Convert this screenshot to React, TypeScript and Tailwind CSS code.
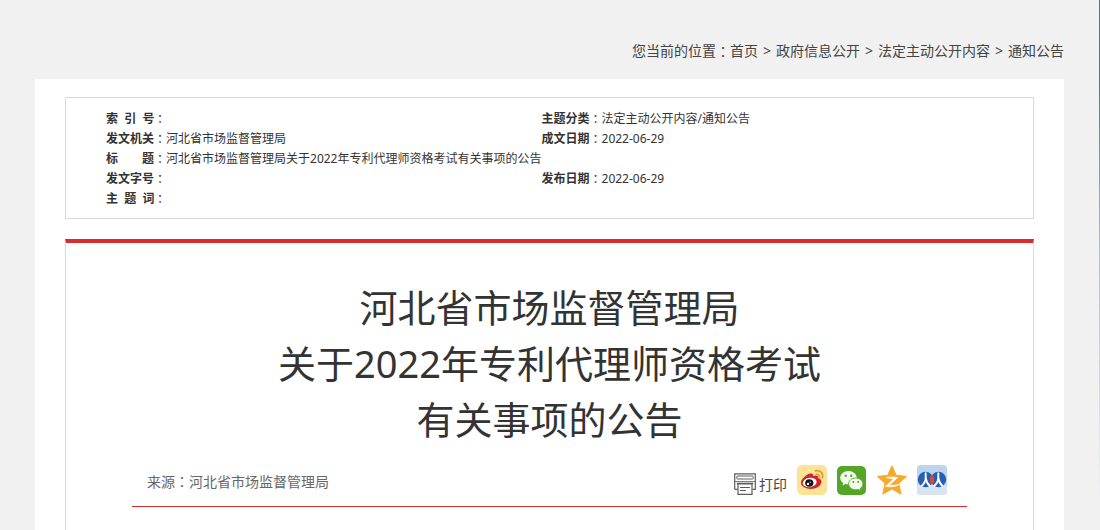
import type { ReactNode } from "react";

const trail = ["首页", "政府信息公开", "法定主动公开内容", "通知公告"];

function Colon() {
  return <span className="font-normal font-['Noto_Sans_CJK_TC',sans-serif]">：</span>;
}

function Field({ label, children, span }: { label: string; children?: ReactNode; span?: number }) {
  return (
    <td colSpan={span} className="p-0 whitespace-nowrap">
      <div className="flex">
        <span className="w-12 whitespace-pre font-bold">{label}</span>
        <Colon />
        <span>{children}</span>
      </div>
    </td>
  );
}

function PrinterIcon() {
  return (
    <svg width="22" height="22" viewBox="0 0 22 22" fill="none" stroke="#5c5c5c" aria-hidden="true">
      <path d="M.7 16.300V.8h20.600v15.500h-2.800M.7 16.300h2.800" strokeWidth="1.200" />
      <rect x="2.800" y="3" width="16.400" height="3" rx=".8" />
      <path d="M1 8.500h20" strokeWidth=".8" />
      <path d="M2.800 10.500h16.400" strokeWidth="1.600" />
      <path d="M4 11h14v10.300H4z" fill="#fff" strokeWidth="1.200" />
      <path d="M6 14.500h10M6 17.500h6" strokeWidth="1.200" />
    </svg>
  );
}

function WeiboIcon() {
  return (
    <svg width="30" height="30" viewBox="0 0 30 30" aria-hidden="true">
      <rect width="30" height="30" rx="5" fill="#fce396" />
      <path d="M12.500 8.800c2.200-1 4.300-.2 3.600 2.300 2.900-1 5.400-.6 4.900 2 2.800.8 3.900 2.500 3.200 4.900-1.100 3.600-5.400 5.900-10.300 5.900-5.300 0-9.900-2.300-9.900-6.300 0-3.300 4.500-7.500 8.500-8.800z" fill="#d2232a" />
      <ellipse cx="12.700" cy="17.500" rx="7" ry="4.700" transform="rotate(-8 12.700 17.500)" fill="#fff" />
      <ellipse cx="12.300" cy="18" rx="4.100" ry="3.800" fill="#111" />
      <circle cx="11" cy="18.900" r="1.200" fill="#fff" />
      <circle cx="13.300" cy="17.200" r=".6" fill="#fff" />
      <path d="M18.500 5.800c4.600-1 8 2.400 6.900 7" fill="none" stroke="#dd9a3c" strokeWidth="1.700" strokeLinecap="round" />
      <path d="M19 9.200c2.300-.4 3.900 1.100 3.400 3.300" fill="none" stroke="#dd9a3c" strokeWidth="1.400" strokeLinecap="round" />
    </svg>
  );
}

function WechatIcon() {
  return (
    <svg width="30" height="30" viewBox="0 0 30 30" aria-hidden="true">
      <rect y="1" width="29" height="29" rx="5" fill="#55a527" />
      <path d="M11.500 6C6.900 6 3.200 9 3.200 12.800c0 2.200 1.200 4 3.100 5.300l-.8 2.500 3-1.500c1 .3 2 .4 3 .4 4.600 0 8.300-3 8.300-6.700S16.100 6 11.500 6z" fill="#f4fbef" />
      <path d="M18.800 13c-4 0-7.200 2.600-7.200 5.900s3.200 5.900 7.200 5.900c.9 0 1.700-.1 2.500-.4l2.500 1.400-.7-2.200c1.700-1.100 2.800-2.800 2.800-4.700 0-3.300-3.100-5.900-7.100-5.900z" fill="#f4fbef" stroke="#55a527" strokeWidth=".9" />
      <g fill="#55a527">
        <circle cx="8.700" cy="10.700" r="1.200" />
        <circle cx="14.200" cy="10.700" r="1.200" />
        <circle cx="16.400" cy="17" r="1" />
        <circle cx="21.200" cy="17" r="1" />
      </g>
    </svg>
  );
}

function QzoneIcon() {
  return (
    <svg width="30" height="30" viewBox="0 0 30 30" aria-hidden="true">
      <path d="M15 .8l4.200 9.500 10.300 1.100-7.700 7 2.200 10.800L15 24l-9.200 5.200L8 18.400l-7.600-7 10.300-1.100z" fill="#f7a92c" stroke="#f7a92c" strokeLinejoin="round" />
      <path d="M9.300 12.500c4-.5 7.700-.5 11.300 0l-8.300 7.600c3.300.5 6.300.3 9.700-.5-4 2.100-8.500 2.700-13.500 1.700l8.200-7.500c-2.600-.3-4.800-.7-7.400-1.300z" fill="#fff" stroke="#fff" strokeWidth=".8" />
    </svg>
  );
}

function RenrenIcon() {
  return (
    <svg width="30" height="30" viewBox="0 0 30 30" aria-hidden="true">
      <rect width="30" height="30" rx="4" fill="#bdd5ec" />
      <path d="M0 20h30v6a4 4 0 0 1-4 4H4a4 4 0 0 1-4-4z" fill="#d9e4ef" />
      <circle cx="8.500" cy="14.500" r="7.700" fill="#2460b4" />
      <circle cx="21.500" cy="14.500" r="7.700" fill="#2460b4" />
      <ellipse cx="15" cy="14.500" rx="2" ry="4.800" fill="#e8432c" />
      <path d="M8.700 7.500V13c0 3-1.600 5.800-4.400 8.300M8.700 13c.4 3 1.700 5.800 4.400 8.300M21.300 7.500V13c0 3-1.600 5.800-4.400 8.300M21.300 13c.4 3 1.700 5.800 4.400 8.300" fill="none" stroke="#fff" strokeWidth="1.900" />
    </svg>
  );
}

const shares = [
  { name: "新浪微博", icon: <WeiboIcon /> },
  { name: "微信", icon: <WechatIcon /> },
  { name: "QQ空间", icon: <QzoneIcon /> },
  { name: "人人网", icon: <RenrenIcon /> },
];

export default function App() {
  return (
    <div className="flex min-h-screen bg-[#f1f1f1] font-['Noto_Sans','Noto_Sans_CJK_SC',sans-serif] text-[#333]">
      <div className="flex min-w-0 flex-1 flex-col px-[35px]">
        <nav aria-label="当前位置" className="flex h-[79px] items-end justify-end pb-[18px] text-sm leading-5 text-[#444]">
          <span>您当前的位置</span>
          <Colon />
          <ol className="flex gap-[5px]">
            {trail.map((item, i) => (
              <li key={item} className="flex gap-[5px]">
                {i > 0 && <span>&gt;</span>}
                <a href="#">{item}</a>
              </li>
            ))}
          </ol>
        </nav>
        <main className="flex flex-1 flex-col bg-white px-[30px] pt-[18px]">
          <section className="border border-[#dadada] pt-[11px] pr-14 pb-[9px] pl-10">
            <table className="w-full table-fixed border-collapse text-xs leading-5">
              <tbody>
                <tr>
                  <Field label="索  引  号" />
                  <Field label="主题分类">法定主动公开内容/通知公告</Field>
                </tr>
                <tr>
                  <Field label="发文机关">河北省市场监督管理局</Field>
                  <Field label="成文日期">2022-06-29</Field>
                </tr>
                <tr>
                  <Field label="标　　题" span={2}>河北省市场监督管理局关于2022年专利代理师资格考试有关事项的公告</Field>
                </tr>
                <tr>
                  <Field label="发文字号" />
                  <Field label="发布日期">2022-06-29</Field>
                </tr>
                <tr>
                  <Field label="主  题  词" />
                </tr>
              </tbody>
            </table>
          </section>
          <article className="mt-5 flex-1 border-x border-t-4 border-x-[#dadada] border-t-[#d92c2f] px-[66px] pt-9">
            <h1 className="text-center text-[38px] leading-[56px]">
              河北省市场监督管理局
              <br />
              关于2022年专利代理师资格考试
              <br />
              有关事项的公告
            </h1>
            <div className="flex h-[60px] items-end justify-between border-b border-[#d92c2f] pr-5 pb-[11px] pl-[15px] text-sm leading-5 text-[#666]">
              <p className="pb-[3px]">
                来源
                <Colon />
                河北省市场监督管理局
              </p>
              <div className="flex items-end gap-[10px]">
                <button type="button" className="flex items-end gap-[3px] text-[#444]">
                  <PrinterIcon />
                  打印
                </button>
                {shares.map((s) => (
                  <a key={s.name} href="#" aria-label={s.name}>
                    {s.icon}
                  </a>
                ))}
              </div>
            </div>
          </article>
        </main>
      </div>
      <div className="w-px bg-linear-to-b from-[#4a76a8] from-15% via-[#b3bcd9] via-48% to-[#f1f1f1] to-95%" />
    </div>
  );
}
